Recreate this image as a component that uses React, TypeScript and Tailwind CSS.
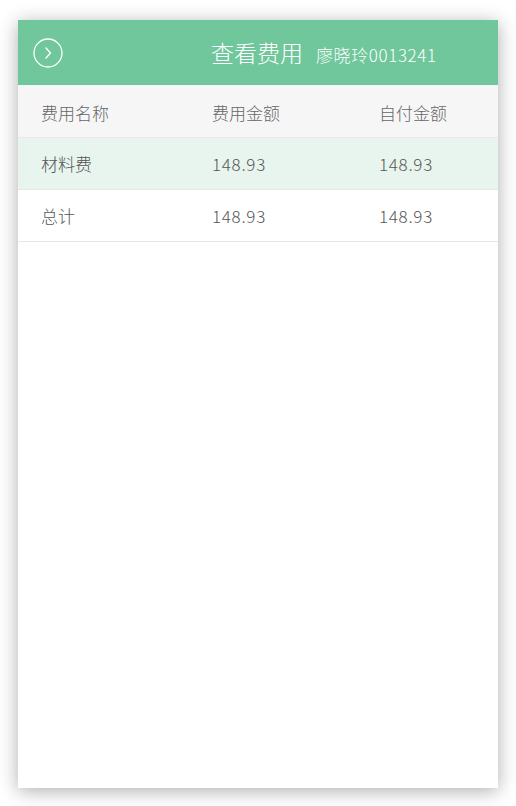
const rows = [
  { name: "材料费", total: "148.93", self: "148.93", highlight: true },
  { name: "总计", total: "148.93", self: "148.93", highlight: false },
];

const font = { fontFamily: '"Noto Sans CJK SC", "Noto Sans", sans-serif' };

function BackIcon() {
  return (
    <svg width="30" height="30" viewBox="0 0 30 30" fill="none" aria-hidden="true">
      <circle cx="15" cy="15" r="14" stroke="white" strokeWidth="1.3" />
      <path d="M13 10 L17.5 15 L13 20" stroke="white" strokeWidth="1.4" strokeLinecap="round" strokeLinejoin="round" />
    </svg>
  );
}

export default function App() {
  return (
    <div className="min-h-[806px] w-[516px] bg-white pt-5 pb-[18px] font-light" style={font}>
      <div className="mx-[18px] flex h-[768px] w-[480px] flex-col bg-white shadow-[0_3px_18px_rgba(0,0,0,0.32)]">
        <header className="flex h-[65px] items-center bg-[#70c79c] pl-[15px] text-white">
          <BackIcon />
          <div className="ml-[148px] flex items-baseline gap-[13px]">
            <span className="text-[23px] leading-none">查看费用</span>
            <span className="text-[17px] leading-none tracking-[0.6px]">廖晓玲0013241</span>
          </div>
        </header>

        <div className="grid h-[53px] grid-cols-[171px_167px_1fr] items-center border-b border-[#e8e8e8] bg-[#f6f6f6] px-[23px] pt-[3px] text-[17px] text-[#666]">
          <span>费用名称</span>
          <span>费用金额</span>
          <span>自付金额</span>
        </div>

        {rows.map((row) => (
          <div
            key={row.name}
            className={`grid h-[52px] grid-cols-[171px_167px_1fr] items-center border-b border-[#e8e8e8] px-[23px] text-[17px] text-[#555] ${
              row.highlight ? "bg-[#e8f5ee]" : "bg-white"
            }`}
          >
            <span>{row.name}</span>
            <span className="tracking-[0.7px]">{row.total}</span>
            <span className="tracking-[0.7px]">{row.self}</span>
          </div>
        ))}
      </div>
    </div>
  );
}
